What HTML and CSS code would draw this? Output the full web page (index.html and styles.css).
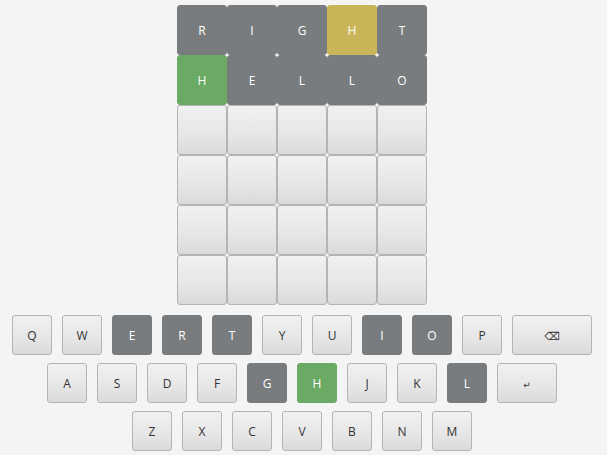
FILE: index.html
```html
<!DOCTYPE html>
<html>
<head>
<meta charset="utf-8">
<link rel="stylesheet" href="styles.css">
</head>
<body>
<div class="app">
  <div class="board">
    <div class="tile absent">R</div><div class="tile absent">I</div><div class="tile absent">G</div><div class="tile present">H</div><div class="tile absent">T</div>
    <div class="tile correct">H</div><div class="tile absent">E</div><div class="tile absent">L</div><div class="tile absent">L</div><div class="tile absent">O</div>
    <div class="tile"></div><div class="tile"></div><div class="tile"></div><div class="tile"></div><div class="tile"></div>
    <div class="tile"></div><div class="tile"></div><div class="tile"></div><div class="tile"></div><div class="tile"></div>
    <div class="tile"></div><div class="tile"></div><div class="tile"></div><div class="tile"></div><div class="tile"></div>
    <div class="tile"></div><div class="tile"></div><div class="tile"></div><div class="tile"></div><div class="tile"></div>
  </div>
  <div class="keyboard">
    <div class="krow">
      <div class="key">Q</div><div class="key">W</div><div class="key absent">E</div><div class="key absent">R</div><div class="key absent">T</div><div class="key">Y</div><div class="key">U</div><div class="key absent">I</div><div class="key absent">O</div><div class="key">P</div><div class="key back">⌫</div>
    </div>
    <div class="krow">
      <div class="key">A</div><div class="key">S</div><div class="key">D</div><div class="key">F</div><div class="key absent">G</div><div class="key correct">H</div><div class="key">J</div><div class="key">K</div><div class="key absent">L</div><div class="key enter">↵</div>
    </div>
    <div class="krow">
      <div class="key">Z</div><div class="key">X</div><div class="key">C</div><div class="key">V</div><div class="key">B</div><div class="key">N</div><div class="key">M</div>
    </div>
  </div>
</div>
</body>
</html>
```
FILE: styles.css
```css
html, body {
  margin: 0;
  padding: 0;
  background: #f4f4f4;
}
body {
  font-family: "Open Sans", "DejaVu Sans", sans-serif;
  font-size: 12px;
  color: #333333;
}
.app {
  width: 604px;
  display: flex;
  flex-direction: column;
  align-items: center;
  padding-top: 5px;
}
.board {
  display: grid;
  grid-template-columns: repeat(5, 50px);
  grid-auto-rows: 50px;
}
.tile, .key {
  box-sizing: border-box;
  display: flex;
  align-items: center;
  justify-content: center;
  border: 1px solid #b4b4b4;
  border-radius: 3px;
  background: linear-gradient(to bottom, #f1f1f1 0%, #e6e6e6 60%, #dadada 100%);
  color: #333333;
}
.tile.absent, .key.absent {
  background: #787c7e;
  border-color: #787c7e;
  color: #ffffff;
}
.tile.present, .key.present {
  background: #c9b458;
  border-color: #c9b458;
  color: #ffffff;
}
.tile.correct, .key.correct {
  background: #6aaa64;
  border-color: #6aaa64;
  color: #ffffff;
}
.keyboard {
  margin-top: 10px;
  display: flex;
  flex-direction: column;
  align-items: center;
  gap: 8px;
}
.krow {
  display: flex;
  gap: 10px;
}
.key {
  width: 40px;
  height: 40px;
}
.key.back {
  width: 80px;
  font-size: 11px;
}
.key.enter {
  width: 60px;
  font-size: 9px;
  padding-top: 2px;
}
```
